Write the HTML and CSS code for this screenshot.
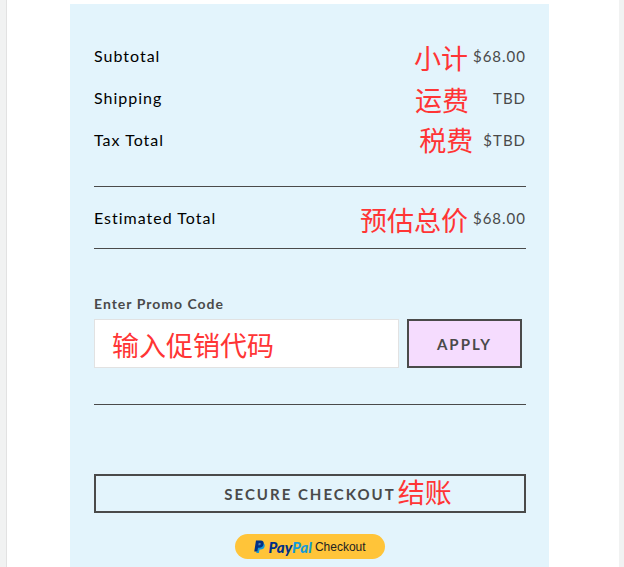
FILE: index.html
```html
<!DOCTYPE html>
<html lang="en">
<head>
<meta charset="utf-8">
<meta name="viewport" content="width=device-width, initial-scale=1">
<title>Order summary</title>
<link rel="stylesheet" href="styles.css">
</head>
<body>
<main class="sheet">
  <section class="summary">
    <dl class="totals">
      <div class="row"><dt>Subtotal</dt><dd><span class="note note-flush" lang="zh">小计</span>$68.00</dd></div>
      <div class="row"><dt>Shipping</dt><dd><span class="note note-far" lang="zh">运费</span>TBD</dd></div>
      <div class="row"><dt>Tax Total</dt><dd><span class="note note-mid" lang="zh">税费</span>$TBD</dd></div>
    </dl>
    <dl class="totals grand">
      <div class="row"><dt>Estimated Total</dt><dd><span class="note note-flush" lang="zh">预估总价</span>$68.00</dd></div>
    </dl>
    <form class="promo">
      <label for="promo">Enter Promo Code</label>
      <div class="promo-line">
        <input id="promo" type="text" placeholder="输入促销代码">
        <button class="btn apply" type="button">APPLY</button>
      </div>
    </form>
    <button class="btn checkout" type="button"><span class="checkout-text">SECURE CHECKOUT<span class="note note-after" lang="zh">结账</span></span></button>
    <button class="paypal" type="button">
      <svg class="mark" viewBox="0 0 20 24" aria-hidden="true">
        <path fill="#179bd7" d="M8 6h9.500q2.800 2 2 5.500-1.200 6-7.500 6h-2L9 24H4z"/>
        <path fill="#003087" d="M3.500 1h9q6 .5 5.200 6-1 7.500-8.300 7.500H7.300L6 21H.3z"/>
        <path fill="#4f7fb0" d="M8.500 5.500h2.500q1.800.3 1.400 2-.5 2.300-2.900 2.300H7.700z"/>
      </svg>
      <span class="wordmark"><span class="pay">Pay</span><span class="pal">Pal</span></span>
      <span>Checkout</span>
    </button>
  </section>
</main>
</body>
</html>
```
FILE: styles.css
```css
* {
  box-sizing: border-box;
}

body {
  margin: 0;
  background: #f1f2f2;
  color: #4a4a4a;
  font: 15px/20px Lato, "Noto Sans CJK SC", sans-serif;
}

.sheet {
  min-height: 100vh;
  margin: 0 5px 0 6px;
  padding: 4px 70px 0 63px;
  border-left: 1px solid #e2e2e2;
  background: #fff;
}

.summary {
  display: flex;
  flex-direction: column;
  min-height: calc(100vh - 4px);
  padding: 31px 23px 8px 24px;
  background: #e3f4fc;
}

.totals {
  margin: 0;
  padding-bottom: 25px;
  border-bottom: 1px solid #4a4a4a;
  letter-spacing: 1px;
}

.row {
  display: flex;
  justify-content: space-between;
  align-items: center;
  height: 42px;
}

dt {
  color: #000;
  font-size: 16px;
}

dd {
  position: relative;
  margin: 0;
}

.grand {
  padding: 10px 0 9px;
}

.note {
  position: absolute;
  top: 50%;
  margin-top: -18px;
  color: #ff3535;
  font: 27px/40px "Noto Sans CJK SC", sans-serif;
  letter-spacing: 0;
  white-space: nowrap;
}

.note-flush {
  right: 100%;
  margin-right: 5px;
}

.note-mid {
  right: 100%;
  margin-right: 10px;
  margin-top: -20px;
}

.note-far {
  right: 100%;
  margin-right: 24px;
}

.note-after {
  left: 100%;
  margin-left: 2px;
  margin-top: -22px;
}

.promo {
  position: relative;
  padding: 45px 4px 36px 0;
}

.promo::after {
  content: "";
  position: absolute;
  right: 0;
  bottom: -1px;
  left: 0;
  height: 1px;
  background: #4a4a4a;
}

.promo label {
  display: block;
  margin-bottom: 5px;
  font-size: 14px;
  font-weight: 700;
  letter-spacing: 1px;
}

.promo-line {
  display: flex;
  gap: 8px;
}

.promo input {
  flex: 1;
  min-width: 0;
  height: 49px;
  padding: 2px 17px 0;
  border: 1px solid #e2e2e2;
  background: #fff;
  color: #ff3535;
  font: 27px "Noto Sans CJK SC", sans-serif;
}

.promo input::placeholder {
  color: #ff3535;
}

.btn {
  border: 2px solid #4a4a4a;
  background: transparent;
  color: #4a4a4a;
  font: 700 15px/20px Lato, sans-serif;
  letter-spacing: 2px;
}

.apply {
  width: 115px;
  background: #f5dcfe;
}

.checkout {
  height: 39px;
  margin-top: 70px;
}

.checkout-text {
  position: relative;
}

.paypal {
  display: flex;
  align-self: center;
  align-items: center;
  justify-content: center;
  gap: 3px;
  width: 150px;
  height: 25px;
  margin-top: 21px;
  padding: 0;
  border: 0;
  border-radius: 13px;
  background: #ffc439;
  color: #222;
  font: 12px/16px "Liberation Sans", sans-serif;
}

.mark {
  width: 11px;
  height: 13px;
}

.wordmark {
  font: italic 900 15px/16px Lato, sans-serif;
}

.pay {
  color: #003087;
}

.pal {
  color: #179bd7;
}
```
